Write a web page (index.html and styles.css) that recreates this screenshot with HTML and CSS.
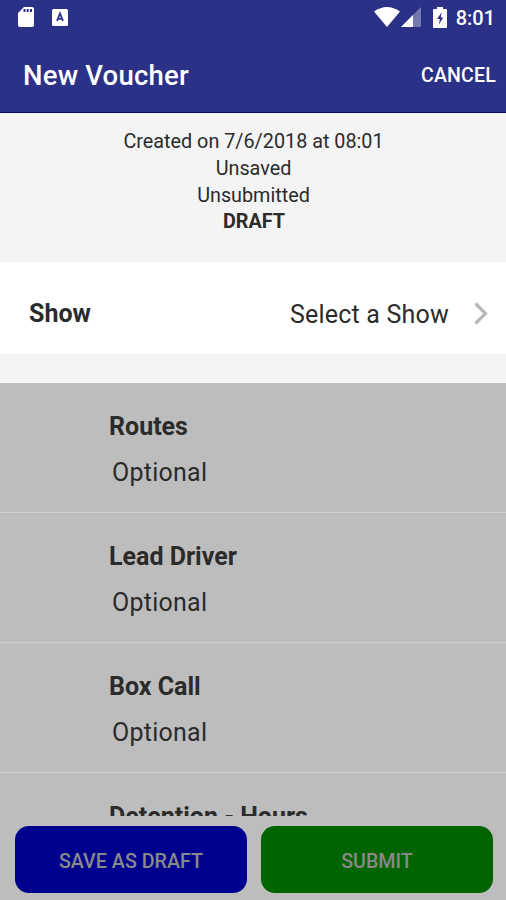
FILE: index.html
```html
<!DOCTYPE html>
<html lang="en">
<head>
    <meta charset="UTF-8">
    <meta name="viewport" content="width=device-width, initial-scale=1.0">
    <title>New Voucher</title>
    <link rel="stylesheet" href="styles.css">
</head>
<body>

<div class="screen">
    <div class="status-bar">
        <div class="status-left">
            <svg class="sd-icon" width="16" height="20" viewBox="0 0 16 20"><path fill="#fff" fill-rule="evenodd" d="M6 0h8a2 2 0 0 1 2 2v16a2 2 0 0 1-2 2H2a2 2 0 0 1-2-2V6zM5.500 2v3h2V2zM8.700 2v3h2V2zM12 2v3h2V2z"/></svg>
            <svg class="a-icon" width="16" height="17" viewBox="0 0 16 17"><rect width="16" height="17" rx="1.500" fill="#fff"/><path d="M5 12L8 4.500 11 12M6 9.800h4" fill="none" stroke="#2c3188" stroke-width="1.800"/></svg>
        </div>
        <div class="status-right">
            <svg class="wifi-icon" width="26" height="20" viewBox="0 0 26 20"><path fill="#fff" d="M0 4.500Q13-4.500 26 4.500L13 20z"/></svg>
            <svg class="signal-icon" width="20" height="20" viewBox="0 0 20 20"><path fill="#7477b0" d="M20 0v20H0z"/><path fill="#fff" d="M12 8v12H0z"/></svg>
            <svg class="battery-icon" width="14" height="21" viewBox="0 0 14 21"><path fill="#fff" d="M4 0h6v2h3a1 1 0 0 1 1 1v17a1 1 0 0 1-1 1H1a1 1 0 0 1-1-1V3a1 1 0 0 1 1-1h3z"/><path fill="#2c3188" d="M8.500 5.500L4 12h2.800L6 17.500 10.200 10.500H7.800z"/></svg>
            <span>8:01</span>
        </div>
    </div>

    <div class="header">
        <div class="title">New Voucher</div>
        <div class="cancel">CANCEL</div>
    </div>

    <div class="info">
        <div>Created on 7/6/2018 at 08:01</div>
        <div>Unsaved</div>
        <div>Unsubmitted</div>
        <div class="draft">DRAFT</div>
    </div>

    <div class="show-row">
        <div class="show-label">Show</div>
        <div class="show-value">Select a Show</div>
        <svg width="15" height="23" viewBox="0 0 15 23"><path d="M1.500 1.500L11.500 11.500 1.500 21.500" fill="none" stroke="#b8b8b8" stroke-width="3.200"/></svg>
    </div>

    <div class="list">
        <div class="item">
            <div class="item-label">Routes</div>
            <div class="item-value">Optional</div>
        </div>
        <div class="item">
            <div class="item-label">Lead Driver</div>
            <div class="item-value">Optional</div>
        </div>
        <div class="item">
            <div class="item-label">Box Call</div>
            <div class="item-value">Optional</div>
        </div>
        <div class="item">
            <div class="item-label">Detention - Hours</div>
        </div>
    </div>

    <div class="footer">
        <div class="button save">SAVE AS DRAFT</div>
        <div class="button submit">SUBMIT</div>
    </div>
</div>

</body>
</html>
```
FILE: styles.css
```css
* {
    box-sizing: border-box;
}
body {
    margin: 0;
    font-family: Roboto, sans-serif;
    background-color: #f4f4f4;
    color: #2b2b2b;
}
.screen {
    display: flex;
    flex-direction: column;
    width: 506px;
    height: 900px;
    overflow: hidden;
}
.status-bar {
    display: flex;
    justify-content: space-between;
    height: 37px;
    padding: 7px 11px 0 18px;
    background-color: #2c3188;
    color: #fff;
}
.status-left, .status-right {
    display: flex;
    align-items: flex-start;
}
.sd-icon {
    margin-right: 18px;
}
.a-icon {
    margin-top: 2px;
}
.signal-icon {
    margin-left: 1px;
    margin-right: 12px;
}
.battery-icon {
    margin-right: 9px;
}
.status-right span {
    font-size: 20px;
    line-height: 23px;
    font-weight: 500;
}
.header {
    display: flex;
    justify-content: space-between;
    align-items: center;
    height: 76px;
    padding: 1px 10px 0 23px;
    background-color: #2c3188;
    border-bottom: 1px solid #0b0c6c;
    color: #fff;
    font-weight: 500;
}
.title {
    font-size: 27.500px;
    letter-spacing: 0.2px;
}
.cancel {
    font-size: 19.500px;
    letter-spacing: 0.2px;
}
.info {
    height: 149px;
    padding: 16px 0 0 1px;
    text-align: center;
    font-size: 19.800px;
    line-height: 26.800px;
}
.draft {
    padding-left: 1px;
    font-weight: 700;
}
.show-row {
    display: flex;
    align-items: center;
    height: 92px;
    padding: 10px 17px 0 29px;
    background-color: #fff;
    font-size: 25px;
}
.show-label {
    flex: 1;
    font-weight: 700;
}
.show-value {
    margin: 2px 25px 0 0;
    letter-spacing: 0.2px;
}
.list {
    height: 433px;
    margin-top: 29px;
    overflow: hidden;
    background-color: #bdbdbd;
}
.item {
    height: 130px;
    padding: 29px 0 0 109px;
    border-bottom: 1px solid #d0d0d0;
    font-size: 25px;
    line-height: 30px;
}
.item-label {
    font-weight: 700;
}
.item-value {
    margin: 16px 0 0 3px;
    letter-spacing: 0.25px;
}
.footer {
    display: flex;
    gap: 14px;
    height: 84px;
    padding: 10px 13px 7px 15px;
    background-color: #bdbdbd;
}
.button {
    flex: 1;
    display: flex;
    align-items: center;
    justify-content: center;
    padding-top: 3px;
    border-radius: 14px;
    font-size: 19.700px;
    font-weight: 500;
    color: #898989;
}
.save {
    background-color: #00008f;
}
.submit {
    background-color: #006400;
}
```
